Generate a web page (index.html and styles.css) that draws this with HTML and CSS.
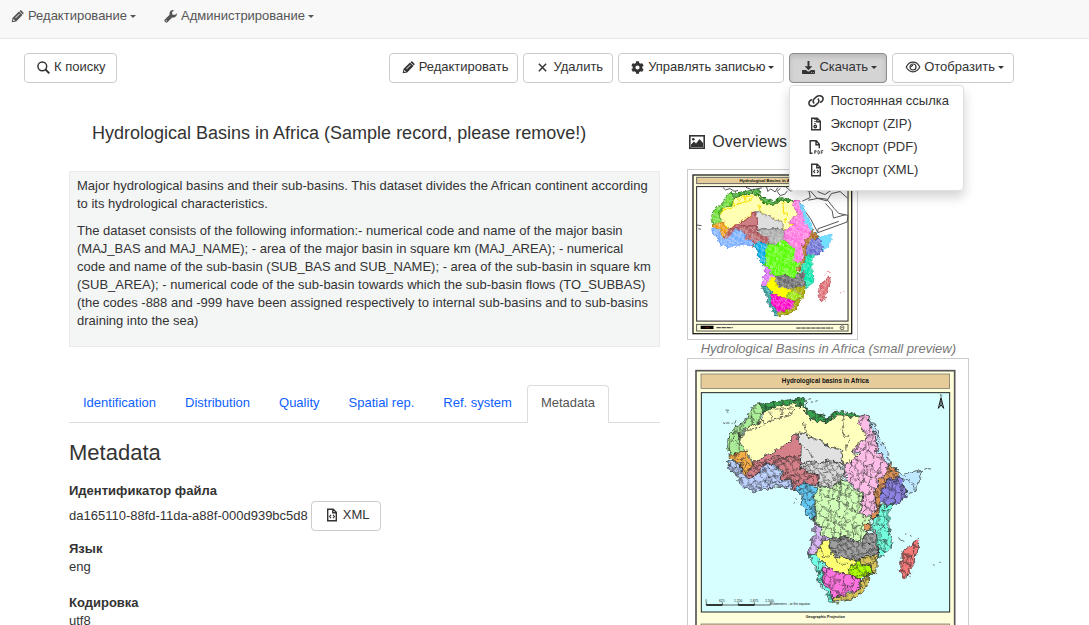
FILE: index.html
```html
<!DOCTYPE html>
<html lang="ru">
<head>
<meta charset="utf-8">
<title>Hydrological Basins in Africa</title>
<link rel="stylesheet" href="styles.css">
</head>
<body>
<svg class="sprite" aria-hidden="true">
  <defs>
    <symbol id="i-pencil" viewBox="0 0 16 16"><path fill="currentColor" fill-rule="evenodd" d="M.8 15.200l1.200-5.700L9.800 1.900l4.300 4.300-7.700 7.800zM3 11l-.5 2.500 2.500-.5zM5.200 9.500l.6.600 5-5-.6-.6zM11 .9c.6-.6 1.400-.6 2 0l2.100 2.100c.6.6.6 1.400 0 2l-.5.500-4.100-4.100z"/></symbol>
    <symbol id="i-wrench" viewBox="0 0 16 16"><path fill="currentColor" fill-rule="evenodd" d="M15.700 3.900c.8 3.200-2.200 6.300-5.600 5.300L4.300 15c-1.900 1.800-5-1.300-3.300-3.200l5.900-5.900C5.900 2.500 8.900-.6 12.200.3L9.800 2.700l.5 2.900 2.900.5zM2.700 12.500a.8.800 0 1 0 .1 1.600.8.800 0 0 0-.1-1.600z"/></symbol>
    <symbol id="i-search" viewBox="0 0 16 16"><g fill="none" stroke="currentColor" stroke-width="1.800"><circle cx="6.500" cy="6.500" r="5.400"/><path d="M10.500 10.500l4.700 4.700" stroke-width="2.300"/></g></symbol>
    <symbol id="i-times" viewBox="0 0 16 16"><path d="M3.500 3.500l9 9m0-9l-9 9" fill="none" stroke="currentColor" stroke-width="1.800"/></symbol>
    <symbol id="i-cog" viewBox="0 0 512 512"><path fill="currentColor" d="M487.400 315.700l-42.600-24.600c4.300-23.200 4.300-47 0-70.200l42.600-24.600c4.900-2.800 7.100-8.600 5.500-14-11.100-35.600-30-67.800-54.700-94.600-3.800-4.100-10-5.100-14.800-2.300L380.800 110c-17.900-15.400-38.500-27.300-60.800-35.100V25.800c0-5.600-3.900-10.500-9.400-11.700-36.700-8.200-74.300-7.800-109.200 0-5.500 1.200-9.400 6.100-9.400 11.700V75c-22.200 7.900-42.800 19.800-60.800 35.100L88.700 85.500c-4.900-2.800-11-1.900-14.800 2.300-24.700 26.700-43.600 58.900-54.700 94.600-1.700 5.400.6 11.200 5.500 14L67.300 221c-4.300 23.200-4.300 47 0 70.200l-42.600 24.600c-4.900 2.800-7.100 8.600-5.500 14 11.100 35.600 30 67.800 54.700 94.600 3.800 4.100 10 5.100 14.800 2.300l42.600-24.600c17.900 15.400 38.500 27.300 60.800 35.100v49.200c0 5.600 3.900 10.500 9.400 11.700 36.700 8.200 74.300 7.800 109.200 0 5.500-1.200 9.400-6.100 9.400-11.700v-49.200c22.200-7.900 42.800-19.800 60.800-35.100l42.600 24.600c4.900 2.800 11 1.900 14.800-2.300 24.700-26.700 43.600-58.900 54.700-94.600 1.500-5.500-.7-11.300-5.600-14.100zM256 336c-44.100 0-80-35.900-80-80s35.900-80 80-80 80 35.900 80 80-35.900 80-80 80z"/></symbol>
    <symbol id="i-download" viewBox="0 0 16 16"><path fill="currentColor" fill-rule="evenodd" d="M6.800 0h2.400v6.500h3.500L8 11.500 3.300 6.500h3.500zM1 11h4l2.200 2h1.600L11 11h4c.6 0 1 .4 1 1v3c0 .6-.4 1-1 1H1c-.6 0-1-.4-1-1v-3c0-.6.4-1 1-1zM11.300 13.800v1h1v-1zm2.200 0v1h1v-1z"/></symbol>
    <symbol id="i-eye" viewBox="0 0 16 16"><g fill="none" stroke="currentColor" stroke-width="1.200"><path d="M1.200 8C2.700 5 5 3.200 8 3.200S13.300 5 14.800 8C13.300 11 11 12.800 8 12.800S2.700 11 1.200 8z"/><circle cx="8" cy="8" r="3"/><path d="M6.400 8c0-.9.700-1.600 1.600-1.600"/></g></symbol>
    <symbol id="i-link" viewBox="0 0 16 16"><g fill="none" stroke="currentColor" stroke-width="1.600"><path d="M6.300 10.300c-1.500-1-1.500-3-.3-4.300l2.600-2.300c1.500-1.300 4.200-1.300 5.500-.1s1.300 3.200 0 4.500l-2 1.600"/><path d="M9.700 5.700c1.500 1 1.500 3 .3 4.300l-2.600 2.300c-1.500 1.300-4.200 1.300-5.500.1s-1.300-3.200 0-4.500l2-1.600"/></g></symbol>
    <symbol id="i-zip" viewBox="0 0 16 16"><g fill="none" stroke="currentColor" stroke-width="1.400"><path d="M3.700 2.200h5.500l3.100 3.100v8.500H3.700zM8.800 2.200v3.500h3.500"/><path d="M7 3v5" stroke-dasharray="1 1"/><circle cx="7.300" cy="10.500" r="1.200"/></g></symbol>
    <symbol id="i-pdf" viewBox="0 0 16 16"><path d="M4.500 14.300H2.200V1.700h6.100l3 3.500v4M8 1.700v4h3.500" fill="none" stroke="currentColor" stroke-width="1.400"/><path d="M6.700 15v-3.400h1.400v1.500H6.700m3.300-1.500V15h.8l.7-.8V12.400l-.7-.8zm3.300 3.400v-3.400h2m-2 1.600h1.500" fill="none" stroke="currentColor" stroke-width=".8"/></symbol>
    <symbol id="i-code" viewBox="0 0 16 16"><g fill="none" stroke="currentColor" stroke-width="1.400"><path d="M3.700 2.200h5.500l3.100 3.100v8.500H3.700zM8.800 2.200v3.500h3.500"/><path d="M7 7.800L5.600 9.500 7 11.200m2-3.400l1.400 1.700L9 11.200" stroke-width="1.100"/></g></symbol>
    <symbol id="i-image" viewBox="0 0 16 14"><rect x=".8" y=".8" width="14.400" height="12.400" fill="none" stroke="currentColor" stroke-width="1.600"/><path fill="currentColor" d="M2 12V9.500L5 6.500l2 2L10.500 4 14 8v4z"/><circle cx="4.300" cy="4.200" r="1.300" fill="currentColor"/></symbol>

    <filter id="rough" x="-2%" y="-2%" width="104%" height="104%"><feTurbulence type="fractalNoise" baseFrequency=".06" numOctaves="3" seed="4"/><feDisplacementMap in="SourceGraphic" scale="22" xChannelSelector="R" yChannelSelector="G"/></filter>
    <g id="cell-lines">
      <path d="M0 20C12 14 16 30 30 26S44 8 58 14 78 28 88 18 108 26 120 20M25 0C30 10 24 18 30 26M70 0C66 6 60 8 58 14M105 0C100 8 92 10 88 18M30 26C26 38 36 44 32 54M32 54C20 50 12 62 0 58M32 54C44 62 52 48 62 52M58 14C54 28 68 38 62 52M62 52C74 60 80 46 92 50M88 18C96 30 84 40 92 50M92 50C104 46 110 62 120 58M32 54C28 68 40 74 34 86M34 86C22 90 12 90 0 96M34 86C30 98 20 106 25 120M62 52C70 66 58 78 66 90M66 90C54 96 44 84 34 86M66 90C72 100 64 110 70 120M92 50C88 64 104 74 98 84M98 84C86 90 78 82 66 90M98 84C108 86 112 100 120 96M98 84C104 98 98 108 105 120M44 14C42 30 50 38 44 56M10 56C18 66 8 78 14 92M108 24C112 34 104 44 108 52"/>
    </g>
    <pattern id="cells" width="120" height="120" patternUnits="userSpaceOnUse" patternTransform="rotate(30) skewX(20) scale(.72)"><use href="#cell-lines" class="cell-ink"/></pattern>
    <pattern id="cells-dense" width="120" height="120" patternUnits="userSpaceOnUse" patternTransform="rotate(-18) skewX(20) scale(.5)"><use href="#cell-lines" class="cell-ink cell-ink-dense"/></pattern>
    <pattern id="cells-light" width="120" height="120" patternUnits="userSpaceOnUse" patternTransform="rotate(30) skewX(20) scale(.54)"><use href="#cell-lines" class="cell-ink-light"/></pattern>

    <path id="b-atlas" d="M222 140L234 165 226 200 190 215 168 232 165 262 178 290 165 302 133 300 125 265 133 240 150 212 180 205 188 180 205 155Z"/>
    <path id="b-north" d="M222 140L240 145 290 138 320 133 360 128 364 140 358 160 385 168 420 185 443 188 445 170 465 168 500 176 525 180 520 190 480 180 455 180 437 197 395 203 375 190 368 172 350 155 320 146 280 155 240 168 225 162Z"/>
    <path id="b-sahara" d="M235 165L262 155 320 142 355 158 370 180 380 195 400 203 440 195 450 172 475 178 525 185 540 210 548 245 530 262 510 275 505 295 525 300 515 312 480 322 470 322 475 285 440 278 400 255 345 233 330 240 300 270 285 280 235 303 205 328 195 300 165 288 162 262 168 236 200 210 235 195Z"/>
    <path id="b-sahara-lines" d="M170 250L180 228 215 222 230 210 280 190 315 183 323 162M235 168L262 160 280 165 320 158M222 185L240 205 262 195 258 170M290 160L285 190M355 200L362 235 380 240M470 180L478 205 468 225 474 240 492 245 482 285"/>
    <path id="b-chad-n" d="M333 235L350 235 385 250 440 278 475 285 470 322 430 318 395 325 380 318 345 325 348 270Z"/>
    <path id="b-chad-s" d="M345 325L380 318 395 325 430 318 472 320 478 375 455 398 425 395 400 390 398 360 370 355 340 335Z"/>
    <path id="b-niger-n" d="M333 240L348 270 348 312 290 325 260 318 230 330 205 325 240 302 285 280 310 262Z"/>
    <path id="b-niger" d="M348 305L342 335 370 352 403 362 400 388 372 385 340 390 330 410 318 405 322 378 290 370 290 345 265 325 240 325 220 355 195 372 175 360 205 320 235 320 270 305Z"/>
    <path id="b-senegal" d="M135 305L145 292 190 288 193 310 207 330 190 350 175 358 165 330 150 318Z"/>
    <path id="b-guinea" d="M127 315L165 325 170 350 195 372 222 352 240 325 265 325 285 345 290 370 325 380 322 402 300 400 270 395 240 404 205 410 165 390 160 365 132 340Z"/>
    <path id="b-gabon" d="M330 390L365 385 398 395 388 425 397 455 395 490 378 498 360 470 348 450 352 425 335 410Z"/>
    <path id="b-congo" d="M398 393L440 400 470 372 490 380 505 400 535 415 530 455 525 475 550 480 556 495 540 525 550 540 525 562 480 545 432 550 410 535 405 510 385 500 395 470 388 425Z"/>
    <path id="b-nile" d="M527 180L555 182 550 195 568 235 572 250 585 275 580 290 605 320 610 345 580 380 568 400 572 430 580 470 560 482 525 475 528 450 535 415 510 400 490 378 478 355 478 325 515 310 530 295 505 290 510 272 548 248 520 205Z"/>
    <path id="b-redsea" d="M550 192L568 210 590 255 605 285 615 320 640 355 665 358 710 346 708 365 690 405 665 425 658 390 635 370 600 318 580 290 570 240Z"/>
    <path id="b-rift" d="M612 322L635 350 640 368 615 370 600 400 585 440 580 490 556 495 555 480 580 465 565 410 580 380 608 350ZM540 505L558 505 556 524 538 524Z"/>
    <path id="b-juba" d="M600 385L620 368 650 372 665 425 640 445 605 450 585 440Z"/>
    <path id="b-east" d="M585 450L630 448 612 470 612 525 622 555 618 580 580 608 575 580 575 530 560 525 565 495 580 485Z"/>
    <path id="b-angola" d="M385 502L405 512 410 535 432 550 412 565 395 598 370 598 378 560 388 540Z"/>
    <path id="b-zambezi" d="M432 552L480 545 525 562 548 535 575 530 578 605 540 605 520 620 485 610 445 600 438 580Z"/>
    <path id="b-kalahari" d="M410 565L432 553 440 600 485 610 515 617 492 657 440 652 420 630 392 605 398 580Z"/>
    <path id="b-limpopo" d="M500 630L520 620 560 635 565 655 535 665 525 675 490 665 492 645Z"/>
    <path id="b-save" d="M518 620L540 605 578 603 575 655 562 660 560 635Z"/>
    <path id="b-orange" d="M415 640L440 640 450 652 490 658 528 675 520 705 490 712 475 722 440 725 435 705 412 685Z"/>
    <path id="b-cape" d="M550 655L552 680 535 710 500 735 445 742 440 727 475 722 520 705 528 678Z"/>
    <path id="b-namib" d="M370 600L392 600 418 632 412 645 412 685 435 705 440 725 445 742 430 740 420 710 400 680 395 640 378 615Z"/>
    <path id="b-madagascar" d="M692 552L702 572 690 620 672 665 650 662 642 645 652 620 650 590 680 570Z"/>
    <path id="b-islands" d="M370 133l8-2M378 141l6 0M391 139l7-2M122 165l10 1M130 173l-5-3M114 203l6 3M122 204l12 0M140 207l4-4M149 206l4-10M332 430l3 4M326 445l4-3M718 343l8-3M728 341l10 1M640 547l6 8 12 4M660 537l4 0M676 540l3 5M699 549l2 3M744 629l5 2M763 622l4 0M628 345l8-8M616 322l5 2M628 338l6 6"/>
    <g id="dense">
      <use href="#b-chad-s"/><use href="#b-niger"/><use href="#b-guinea"/><use href="#b-gabon"/><use href="#b-rift"/><use href="#b-zambezi"/><use href="#b-limpopo"/><use href="#b-save"/><use href="#b-cape"/>
    </g>
    <g id="sparse">
      <use href="#b-atlas"/><use href="#b-north"/><use href="#b-senegal"/><use href="#b-angola"/><use href="#b-juba"/><use href="#b-congo"/><use href="#b-nile"/><use href="#b-east"/><use href="#b-orange"/><use href="#b-madagascar"/><use href="#b-namib"/>
    </g>
  </defs>
</svg>

<nav class="navbar">
  <button class="nav-item" type="button"><svg class="icon"><use href="#i-pencil"/></svg>Редактирование<span class="caret"></span></button>
  <button class="nav-item" type="button"><svg class="icon"><use href="#i-wrench"/></svg>Администрирование<span class="caret"></span></button>
</nav>

<div class="toolbar">
  <button class="btn" type="button"><svg class="icon"><use href="#i-search"/></svg>К поиску</button>
  <div class="actions">
    <button class="btn" type="button"><svg class="icon"><use href="#i-pencil"/></svg>Редактировать</button>
    <button class="btn" type="button"><svg class="icon"><use href="#i-times"/></svg>Удалить</button>
    <button class="btn" type="button"><svg class="icon"><use href="#i-cog"/></svg>Управлять записью<span class="caret"></span></button>
    <div class="dropdown">
      <button class="btn btn-open" type="button" aria-expanded="true"><svg class="icon"><use href="#i-download"/></svg>Скачать<span class="caret"></span></button>
      <ul class="menu">
        <li><a href="#link"><svg class="icon icon-wide"><use href="#i-link"/></svg>Постоянная ссылка</a></li>
        <li><a href="#zip"><svg class="icon icon-wide"><use href="#i-zip"/></svg>Экспорт (ZIP)</a></li>
        <li><a href="#pdf"><svg class="icon icon-wide"><use href="#i-pdf"/></svg>Экспорт (PDF)</a></li>
        <li><a href="#xml"><svg class="icon icon-wide"><use href="#i-code"/></svg>Экспорт (XML)</a></li>
      </ul>
    </div>
    <button class="btn" type="button"><svg class="icon icon-wide"><use href="#i-eye"/></svg>Отобразить<span class="caret"></span></button>
  </div>
</div>

<main class="record">
  <article class="details">
    <h1 class="title">Hydrological Basins in Africa (Sample record, please remove!)</h1>
    <div class="abstract">
      <p>Major hydrological basins and their sub-basins. This dataset divides the African continent according to its hydrological characteristics.</p>
      <p>The dataset consists of the following information:- numerical code and name of the major basin (MAJ_BAS and MAJ_NAME); - area of the major basin in square km (MAJ_AREA); - numerical code and name of the sub-basin (SUB_BAS and SUB_NAME); - area of the sub-basin in square km (SUB_AREA); - numerical code of the sub-basin towards which the sub-basin flows (TO_SUBBAS) (the codes -888 and -999 have been assigned respectively to internal sub-basins and to sub-basins draining into the sea)</p>
    </div>
    <nav class="tabs">
      <a class="tab" href="#identification">Identification</a>
      <a class="tab" href="#distribution">Distribution</a>
      <a class="tab" href="#quality">Quality</a>
      <a class="tab" href="#spatial">Spatial rep.</a>
      <a class="tab" href="#ref">Ref. system</a>
      <a class="tab tab-active" href="#metadata">Metadata</a>
    </nav>
    <section id="metadata">
      <h2 class="section-title">Metadata</h2>
      <dl class="fields">
        <dt>Идентификатор файла</dt>
        <dd class="file-id">da165110-88fd-11da-a88f-000d939bc5d8<button class="btn" type="button"><svg class="icon icon-wide"><use href="#i-code"/></svg>XML</button></dd>
        <dt>Язык</dt>
        <dd>eng</dd>
        <dt>Кодировка</dt>
        <dd>utf8</dd>
      </dl>
    </section>
  </article>

  <aside class="overviews">
    <h2 class="overviews-title"><svg class="icon-image"><use href="#i-image"/></svg>Overviews</h2>
    <figure class="figure">
      <svg class="map map-small" viewBox="37 161 486 486" role="img" aria-label="Hydrological Basins in Africa, small preview">
        <rect class="paper" x="40" y="164" width="479" height="479" stroke-width="4"/>
        <rect class="band" x="51" y="171" width="457" height="19" stroke-width="3"/>
        <text class="map-text small-title" x="270" y="184" text-anchor="middle">Hydrological Basins in Africa</text>
        <rect class="land-view" x="51" y="199" width="457" height="406" stroke-width="3"/>
        <path class="coast" d="M130 201l8 8 14-4 12 8 12-2M200 201l18 8 30-6M262 200l4 14 8-8 14 9 8-13M304 205l-10 8 9 13 14-4 8-10M320 200l14 12 30-4 26 4 4 20-24 11M362 248l15 24 18 24 22 42 88-32 3-20-28-6-14-15-22-28-24-3-32 6M394 212l20 22 30 8 14-22 26-6 23 20M414 200l4 15 20 8 30-20M440 250l20 22 4 22 36-10M416 338l2-12 62-22M52 315l14 2M56 326l8 2"/>
        <g transform="translate(17 128.500) scale(.624 .620)">
          <g filter="url(#rough)">
            <g class="basins-small">
              <use href="#b-sahara" fill="#ffffb4" stroke="#ffe600"/><use href="#b-sahara-lines" fill="none" stroke="#f5e000"/>
              <use href="#b-atlas" fill="#6ddc37" stroke="#3b9b16"/><use href="#b-north" fill="#36a023" stroke="#196f14"/>
              <use href="#b-chad-n" fill="#dedede" stroke="#999"/><use href="#b-chad-s" fill="#a9a9a9" stroke="#777"/>
              <use href="#b-niger-n" fill="#cd7f83" stroke="#a84a52"/><use href="#b-niger" fill="#b35d61" stroke="#8d4147"/>
              <use href="#b-senegal" fill="#ef9b19" stroke="#cc7600"/><use href="#b-guinea" fill="#79afff" stroke="#659dfb"/>
              <use href="#b-gabon" fill="#00a9e6" stroke="#008ec5"/><use href="#b-congo" fill="#55ff00" stroke="#44d808"/>
              <use href="#b-nile" fill="#ff73df" stroke="#e15cc7"/><use href="#b-redsea" fill="#73dfff" stroke="#73cfff"/>
              <use href="#b-rift" fill="#ae6d20" stroke="#985d1a"/><use href="#b-juba" fill="#686ed2" stroke="#5456b5"/>
              <use href="#b-east" fill="#00e6a9" stroke="#17c59b"/><use href="#b-angola" fill="#df73ff" stroke="#c161df"/>
              <use href="#b-zambezi" fill="#686868" stroke="#545454"/><use href="#b-kalahari" fill="#ffff00" stroke="#e6de00"/>
              <use href="#b-limpopo" fill="#98e600" stroke="#7cba09"/><use href="#b-save" fill="#a8a800" stroke="#898900"/>
              <use href="#b-orange" fill="#ff00c5" stroke="#da00ac"/><use href="#b-cape" fill="#a8a800" stroke="#898900"/>
              <use href="#b-namib" fill="#35a6a3" stroke="#237b7c"/><use href="#b-madagascar" fill="#df6870" stroke="#bd5157"/>
            </g>
            <use href="#dense" fill="url(#cells-light)"/><use href="#sparse" fill="url(#cells-light)"/>
            <path d="M676 540l14-8 14-2M745 632l8-2m12-6l4-1" stroke="#df6870" stroke-width="4" fill="none"/>
          </g>
        </g>
        <rect class="legend" x="51" y="615" width="457" height="20" stroke-width="3"/>
        <rect x="63" y="619" width="39" height="10"/><path d="M76 625h14" stroke="#922" stroke-width="2"/>
        <path d="M111 625h49M352 626h111" stroke="#222" stroke-width="3" stroke-dasharray="13 2"/><circle cx="490" cy="625" r="6" fill="none" stroke="#333" stroke-width="2"/><path d="M486 625h8" stroke="#333" stroke-width="2"/>
      </svg>
      <figcaption class="caption">Hydrological Basins in Africa (small preview)</figcaption>
    </figure>
    <figure class="figure">
      <svg class="map map-large" viewBox="9 12 840 1080" role="img" aria-label="Hydrological Basins in Africa">
        <rect class="paper" x="33" y="47" width="776" height="1020" stroke-width="5"/>
        <rect class="band" x="48" y="57" width="746" height="43" stroke-width="2"/>
        <text class="map-text large-title" x="421" y="83" text-anchor="middle">Hydrological basins in Africa</text>
        <rect class="sea" x="49" y="113" width="745" height="658" stroke-width="3"/>
        <g filter="url(#rough)">
          <g class="basins">
            <use href="#b-sahara" fill="#ffffbe"/><use href="#b-sahara-lines" fill="none"/>
            <use href="#b-atlas" fill="#abed98"/><use href="#b-north" fill="#38a150"/>
            <use href="#b-chad-n" fill="#e1e1e1"/><use href="#b-chad-s" fill="#d9d9d9"/>
            <use href="#b-niger-n" fill="#d58088"/><use href="#b-niger" fill="#d58088"/>
            <use href="#b-senegal" fill="#f5ae4a"/><use href="#b-guinea" fill="#bed2ff"/>
            <use href="#b-gabon" fill="#62c9f5"/><use href="#b-congo" fill="#d1ffb8"/>
            <use href="#b-nile" fill="#ffbee8"/><use href="#b-redsea" fill="#bee8ff"/>
            <use href="#b-rift" fill="#dc9358"/><use href="#b-juba" fill="#8d83e5"/>
            <use href="#b-east" fill="#73ffde"/><use href="#b-angola" fill="#d9b8f5"/>
            <use href="#b-zambezi" fill="#a0a0a0"/><use href="#b-kalahari" fill="#ffff73"/>
            <use href="#b-limpopo" fill="#aaff00"/><use href="#b-save" fill="#d7c45b"/>
            <use href="#b-orange" fill="#ff73df"/><use href="#b-cape" fill="#d7c45b"/>
            <use href="#b-namib" fill="#73ffe6"/><use href="#b-madagascar" fill="#f57a7a"/>
          </g>
          <use href="#dense" fill="url(#cells-dense)"/><use href="#sparse" fill="url(#cells)"/>
          <path class="rivers" d="M405 580L412 600 435 605M455 600L460 625 490 625M350 275L370 285 385 310M575 240L590 275M640 368L680 380 688 405"/>
        </g>
        <use href="#b-islands" fill="none" stroke="#222" stroke-width="2"/>
        <text class="map-text tiny" x="768" y="126" text-anchor="middle">N</text>
        <path d="M768 128l-8 32 8-10 8 10zM768 138v12" fill="none" stroke="#111" stroke-width="3"/>
        <path d="M64 742v8h192v-8M112 742v8M160 742v8M208 742v8" fill="none" stroke="#111" stroke-width="2"/><path d="M64 750h48m48 0h48" stroke="#111" stroke-width="4"/>
        <text class="map-text tiny" x="61" y="740">0</text><text class="map-text tiny" x="102" y="740">625</text><text class="map-text tiny" x="147" y="740">1,250</text><text class="map-text tiny" x="195" y="740">1,875</text><text class="map-text tiny" x="241" y="740">2,500</text>
        <text class="map-text tiny" x="258" y="750">Kilometers - at the equator</text>
        <text class="map-text footer-text" x="421" y="789" text-anchor="middle">Geographic Projection</text>
        <rect class="band" x="48" y="807" width="746" height="40" stroke-width="2"/>
        <rect class="legend" x="48" y="860" width="746" height="190" stroke-width="2"/>
      </svg>
    </figure>
  </aside>
</main>
</body>
</html>
```
FILE: styles.css
```css
* { box-sizing: border-box; }

body {
  margin: 0;
  background: #fff;
  color: #333;
  font: 13px/18px "Liberation Sans", Arial, sans-serif;
}

h1, h2, p, ul, dl, dd, figure { margin: 0; padding: 0; }
h1, h2 { font-weight: 400; }
a { color: #0d5fff; text-decoration: none; }
button { font: inherit; color: inherit; cursor: pointer; }

.sprite { position: absolute; width: 0; height: 0; }
.icon { width: 13px; height: 13px; flex: none; margin-right: 4px; }
.icon-wide { width: 16px; height: 16px; margin-right: 3px; }

.caret {
  margin-left: 3px;
  border: 3px solid transparent;
  border-top-color: currentColor;
  border-bottom: 0;
}

.navbar {
  display: flex;
  gap: 28px;
  padding: 7px 11px 13px;
  background: #f8f8f8;
  border-bottom: 1px solid #e7e7e7;
}
.nav-item {
  display: flex;
  align-items: center;
  padding: 0;
  border: 0;
  background: none;
  color: #555;
}

.toolbar {
  display: flex;
  justify-content: space-between;
  padding: 14px 75px 0 24px;
}
.actions { display: flex; gap: 5px; }
.btn {
  display: inline-flex;
  align-items: center;
  padding: 4px 10px 6px 12px;
  border: 1px solid #ccc;
  border-radius: 4px;
  background: #fff;
  white-space: nowrap;
}
.btn-open {
  background: #d4d4d4;
  border-color: #8c8c8c;
  box-shadow: inset 0 3px 5px rgba(0, 0, 0, .12);
}
.actions .btn { padding: 4px 9px 6px 12px; }

.dropdown { position: relative; }
.menu {
  position: absolute;
  top: 100%;
  left: 0;
  z-index: 2;
  min-width: 175px;
  margin-top: 2px;
  padding: 4px 0 8px;
  list-style: none;
  background: #fff;
  border: 1px solid #e0e0e0;
  border-radius: 4px;
  box-shadow: 0 6px 12px rgba(0, 0, 0, .18);
}
.menu a {
  display: flex;
  align-items: center;
  padding: 2px 14px 3px 18px;
  color: #333;
  white-space: nowrap;
}
.menu .icon { margin-right: 6px; }

.record {
  display: grid;
  grid-template-columns: 16fr 9fr;
  gap: 27px;
  padding: 38px 69px 0;
}
.title { padding: 0 23px; font-size: 18px; line-height: 24px; }
.abstract {
  margin-top: 26px;
  padding: 5px 7px 7px;
  background: #f4f6f6;
  border: 1px solid #ebebeb;
}
.abstract p { margin-bottom: 9px; }

.tabs {
  display: flex;
  gap: 1px;
  margin-top: 38px;
  border-bottom: 1px solid #ddd;
}
.tab {
  margin-bottom: -1px;
  padding: 8px 13px 10px;
  border: 1px solid transparent;
  border-radius: 4px 4px 0 0;
}
.tab-active {
  color: #555;
  background: #fff;
  border-color: #ddd #ddd #fff;
}

.section-title { margin-top: 17px; font-size: 22px; line-height: 26px; }
.fields { margin-top: 16px; }
.fields dt { font-weight: 700; }
.fields dd { margin-bottom: 18px; }
.fields .file-id {
  display: flex;
  align-items: center;
  gap: 3px;
  margin: 1px 0 9px;
}

.overviews-title {
  display: flex;
  align-items: center;
  gap: 7px;
  padding: 10px 2px 16px;
  font-size: 16px;
  line-height: 22px;
}
.icon-image { width: 16px; height: 14px; }
.figure { width: 282px; max-width: 100%; }
.caption { text-align: center; font-style: italic; color: #777; }

.map { display: block; border: 1px solid #ccc; }
.map-small { width: 171px; padding: 4px; }
.map-large { width: 100%; }
.map-text { font-family: "Liberation Sans", Arial, sans-serif; font-weight: 700; fill: #111; }
.small-title { font-size: 13px; }
.large-title { font-size: 19px; }
.footer-text { font-size: 11px; }
.tiny { font-size: 10px; font-weight: 400; }
.paper { fill: #ffffdc; stroke: #222; }
.map-large .paper { stroke: #555; }
.band { fill: #e6cc98; stroke: #666; }
.legend { fill: #ffffdc; stroke: #555; }
.land-view { fill: #fff; stroke: #222; }
.sea { fill: #d8ffff; stroke: #222; }
.coast { fill: none; stroke: #555; stroke-width: 3; }
.basins { stroke: #222; stroke-width: 2; }
.basins-small { stroke-width: 5; }
.cell-ink { fill: none; stroke: #222; stroke-width: 3; }
.cell-ink-dense { stroke-width: 4; }
.cell-ink-light { fill: none; stroke: rgba(255, 255, 255, .4); stroke-width: 8; }
.rivers { fill: none; stroke: #333; stroke-width: 2; }
```
